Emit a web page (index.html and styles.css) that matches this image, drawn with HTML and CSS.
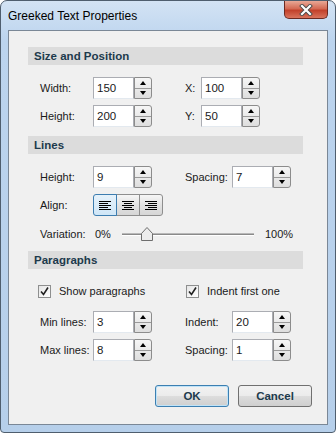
FILE: index.html
```html
<!DOCTYPE html>
<html lang="en">
<head>
    <meta charset="UTF-8">
    <title>Greeked Text Properties</title>
    <link rel="stylesheet" href="styles.css">
</head>
<body>
<div class="window">
    <div class="titlebar">
        <span class="title">Greeked Text Properties</span>
        <div class="close">
            <svg width="16" height="12" viewBox="0 0 16 12">
                <path d="M4 2 L12 10 M12 2 L4 10" stroke="#4a4a4a" stroke-width="4" stroke-linecap="square"/>
                <path d="M4 2 L12 10 M12 2 L4 10" stroke="#ffffff" stroke-width="2.2" stroke-linecap="square"/>
            </svg>
        </div>
    </div>

    <div class="client">
        <div class="section-head head-first">Size and Position</div>
        <div class="row row-first">
            <span class="lbl">Width:</span>
            <div class="spin"><span class="field">150</span><span class="spin-btns"><i class="up"></i><i class="down"></i></span></div>
            <span class="lbl2 narrow">X:</span>
            <div class="spin"><span class="field">100</span><span class="spin-btns"><i class="up"></i><i class="down"></i></span></div>
        </div>
        <div class="row">
            <span class="lbl">Height:</span>
            <div class="spin"><span class="field">200</span><span class="spin-btns"><i class="up"></i><i class="down"></i></span></div>
            <span class="lbl2 narrow">Y:</span>
            <div class="spin"><span class="field">50</span><span class="spin-btns"><i class="up"></i><i class="down"></i></span></div>
        </div>

        <div class="section-head">Lines</div>
        <div class="row row-first">
            <span class="lbl">Height:</span>
            <div class="spin"><span class="field">9</span><span class="spin-btns"><i class="up"></i><i class="down"></i></span></div>
            <span class="lbl2">Spacing:</span>
            <div class="spin"><span class="field">7</span><span class="spin-btns"><i class="up"></i><i class="down"></i></span></div>
        </div>
        <div class="row">
            <span class="lbl">Align:</span>
            <div class="align-group">
                <span class="align-btn active">
                    <svg width="12" height="9" viewBox="0 0 12 9"><path d="M0 0.5h12M0 2.5h9M0 4.5h12M0 6.5h9M0 8.5h12" stroke="#000" stroke-width="1"/></svg>
                </span>
                <span class="align-btn">
                    <svg width="12" height="9" viewBox="0 0 12 9"><path d="M0 0.5h12M2 2.5h8M0 4.5h12M2 6.5h8M0 8.5h12" stroke="#000" stroke-width="1"/></svg>
                </span>
                <span class="align-btn">
                    <svg width="12" height="9" viewBox="0 0 12 9"><path d="M0 0.5h12M3 2.5h9M0 4.5h12M3 6.5h9M0 8.5h12" stroke="#000" stroke-width="1"/></svg>
                </span>
            </div>
        </div>
        <div class="row row-slider">
            <span class="lbl">Variation:</span>
            <span class="pct">0%</span>
            <div class="slider">
                <div class="track"></div>
                <svg class="thumb" width="12" height="14" viewBox="0 0 12 14">
                    <path d="M6 0.5 L11.5 6.5 V13.5 H0.5 V6.5 Z" fill="#ececec" stroke="#6e6e6e"/>
                </svg>
            </div>
            <span class="pct">100%</span>
        </div>

        <div class="section-head">Paragraphs</div>
        <div class="row row-check">
            <label class="check first-check"><span class="box"><svg width="11" height="11" viewBox="0 0 11 11"><path d="M2 5.5 L4.5 8.5 L9 1.5" stroke="#222" stroke-width="1.6" fill="none"/></svg></span>Show paragraphs</label>
            <label class="check"><span class="box"><svg width="11" height="11" viewBox="0 0 11 11"><path d="M2 5.5 L4.5 8.5 L9 1.5" stroke="#222" stroke-width="1.6" fill="none"/></svg></span>Indent first one</label>
        </div>
        <div class="row row-min">
            <span class="lbl">Min lines:</span>
            <div class="spin"><span class="field">3</span><span class="spin-btns"><i class="up"></i><i class="down"></i></span></div>
            <span class="lbl2">Indent:</span>
            <div class="spin"><span class="field">20</span><span class="spin-btns"><i class="up"></i><i class="down"></i></span></div>
        </div>
        <div class="row">
            <span class="lbl">Max lines:</span>
            <div class="spin"><span class="field">8</span><span class="spin-btns"><i class="up"></i><i class="down"></i></span></div>
            <span class="lbl2">Spacing:</span>
            <div class="spin"><span class="field">1</span><span class="spin-btns"><i class="up"></i><i class="down"></i></span></div>
        </div>

        <div class="buttons">
            <button class="btn default">OK</button>
            <button class="btn">Cancel</button>
        </div>
    </div>
</div>
</body>
</html>
```

FILE: styles.css
```css
body {
    margin: 0;
    background: #ffffff;
    font-family: "Liberation Sans", Arial, sans-serif;
    font-size: 11px;
    color: #1a1a1a;
}
.window {
    width: 336px;
    height: 433px;
    box-sizing: border-box;
    border: 1px solid #4f5e6e;
    border-radius: 7px 7px 4px 4px;
    background: linear-gradient(#d3e3f4, #bcd4ee 40px, #b6cfea);
    display: flex;
    flex-direction: column;
}
.titlebar {
    height: 29px;
    display: flex;
    align-items: flex-start;
}
.title {
    font-size: 12px;
    color: #000;
    margin: 8px 0 0 7px;
}
.close {
    margin-left: auto;
    margin-right: 7px;
    width: 44px;
    height: 18px;
    box-sizing: border-box;
    border: 1px solid #6b2a22;
    border-top: none;
    border-radius: 0 0 5px 5px;
    background: linear-gradient(#e9a896, #d46a54 45%, #c2412b 55%, #d9735c);
    display: flex;
    align-items: center;
    justify-content: center;
}
.client {
    flex: 1;
    margin: 0 7px 7px 7px;
    border: 1px solid #7a8796;
    background: #f0f0f0;
    padding: 16px 15px 0 19px;
}
.section-head {
    height: 18px;
    line-height: 18px;
    margin: 9px 9px 0 0;
    padding-left: 6px;
    background: #dcdcdc;
    font-size: 11.5px;
    font-weight: bold;
    color: #1d3a4c;
}
.head-first {
    margin-top: 0;
}
.row {
    display: flex;
    align-items: center;
    height: 22px;
    margin-top: 6px;
    padding-left: 12px;
}
.row-first {
    margin-top: 12px;
}
.lbl {
    width: 53px;
}
.lbl2 {
    width: 47px;
    margin-left: 33px;
}
.lbl2.narrow {
    width: 16px;
}
.spin {
    display: flex;
    height: 22px;
}
.field {
    width: 41px;
    box-sizing: border-box;
    border: 1px solid #abadb3;
    border-bottom-color: #e3e9ef;
    background: #fff;
    padding: 4px 0 0 3px;
    font-size: 11.5px;
}
.spin-btns {
    width: 18px;
    box-sizing: border-box;
    border: 1px solid #8c8c8c;
    border-radius: 0 3px 3px 0;
    display: flex;
    flex-direction: column;
    background: linear-gradient(#f6f6f6, #dedede);
}
.spin-btns i {
    flex: 1;
    display: flex;
    align-items: center;
    justify-content: center;
}
.spin-btns .up {
    border-bottom: 1px solid #9a9a9a;
}
.spin-btns .up::after {
    content: "";
    border-left: 3px solid transparent;
    border-right: 3px solid transparent;
    border-bottom: 4px solid #000;
}
.spin-btns .down::after {
    content: "";
    border-left: 3px solid transparent;
    border-right: 3px solid transparent;
    border-top: 4px solid #000;
}
.align-group {
    display: flex;
    height: 22px;
}
.align-btn {
    width: 24px;
    box-sizing: border-box;
    border: 1px solid #8e8e8e;
    margin-left: -1px;
    background: linear-gradient(#f6f6f6, #e2e2e2 50%, #d6d6d6);
    display: flex;
    align-items: center;
    justify-content: center;
}
.align-btn:last-child {
    border-radius: 0 3px 3px 0;
}
.align-btn.active {
    margin-left: 0;
    border: 1px solid #3d7db0;
    border-radius: 3px 0 0 3px;
    background: linear-gradient(#e6f2fb, #cfe6f7);
    position: relative;
    z-index: 1;
}
.row-slider {
    height: 16px;
    margin-top: 10px;
}
.pct {
    margin-left: 2px;
}
.slider {
    position: relative;
    width: 132px;
    height: 16px;
    margin: 0 9px 0 11px;
}
.track {
    position: absolute;
    left: 0;
    right: 0;
    top: 7px;
    height: 1px;
    background: #8a8a8a;
    border-bottom: 1px solid #fff;
    border-top: 1px solid #b8b8b8;
}
.thumb {
    position: absolute;
    left: 19px;
    top: 1px;
}
.row-check {
    height: 16px;
    margin-top: 14px;
    padding-left: 10px;
}
.check {
    display: flex;
    align-items: center;
}
.first-check {
    width: 148px;
}
.box {
    width: 13px;
    height: 13px;
    box-sizing: border-box;
    border: 1px solid #8e8f8f;
    background: linear-gradient(135deg, #e6e6e6, #ffffff);
    margin-right: 8px;
    display: flex;
    align-items: center;
    justify-content: center;
}
.row-min {
    margin-top: 12px;
}
.buttons {
    display: flex;
    justify-content: flex-end;
    gap: 9px;
    margin-top: 24px;
}
.btn {
    width: 74px;
    height: 22px;
    border: 1px solid #707070;
    border-radius: 3px;
    background: linear-gradient(#f2f2f2, #ebebeb 50%, #dddddd 50%, #cfcfcf);
    font-family: "Liberation Sans", Arial, sans-serif;
    font-size: 11.5px;
    font-weight: bold;
    color: #1d3a4c;
    padding: 0;
}
.btn.default {
    border-color: #3c7fb1;
    box-shadow: inset 0 0 0 1px #bfe3f8;
}
```
